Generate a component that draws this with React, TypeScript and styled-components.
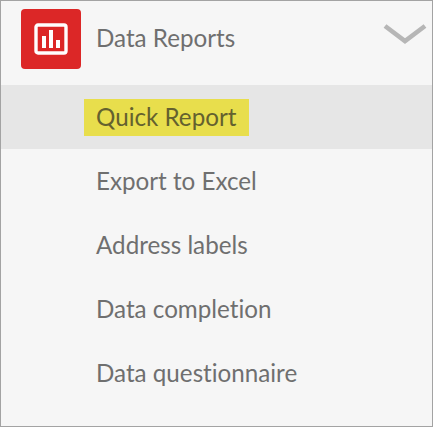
import React from 'react';
import styled, { createGlobalStyle } from 'styled-components';

const items = ['Quick Report', 'Export to Excel', 'Address labels', 'Data completion', 'Data questionnaire'];

const GlobalStyle = createGlobalStyle`
  html, body {
    margin: 0;
    padding: 0;
    background: #f6f6f6;
  }
`;

const Panel = styled.div`
  box-sizing: border-box;
  width: 433px;
  height: 427px;
  border: 1px solid #a3a3a3;
  background: #f6f6f6;
  font-family: Lato, sans-serif;
  font-size: 24.2px;
  font-variant-ligatures: none;
  color: #6f6f6f;
  overflow: hidden;
`;

const Header = styled.div`
  display: flex;
  align-items: center;
  height: 84px;
  padding: 0 5px 16px 20px;
  box-sizing: border-box;
`;

const IconBox = styled.div`
  width: 60px;
  height: 60px;
  margin-top: 7px;
  border-radius: 4px;
  background: #dc2727;
  display: flex;
  align-items: center;
  justify-content: center;
`;

const Title = styled.div`
  margin: 5px 0 0 15px;
  flex: 1;
`;

const Menu = styled.div`
  display: flex;
  flex-direction: column;
`;

const Row = styled.div<{ $active?: boolean }>`
  height: 64px;
  display: flex;
  align-items: center;
  padding-left: 83px;
  background: ${(p) => (p.$active ? '#e6e6e6' : 'transparent')};
`;

const Label = styled.span<{ $active?: boolean }>`
  padding: 0 13px 0 12px;
  height: 37px;
  line-height: 35px;
  background: ${(p) => (p.$active ? '#e8de4c' : 'transparent')};
  color: ${(p) => (p.$active ? '#64612f' : 'inherit')};
`;

function ReportIcon() {
  return (
    <svg width="34" height="32" viewBox="0 0 34 32">
      <rect x="2" y="2" width="30" height="28" rx="2" fill="none" stroke="#fff" strokeWidth="3.4" />
      <rect x="8" y="13" width="4" height="12" fill="#fff" />
      <rect x="15" y="7" width="4" height="18" fill="#fff" />
      <rect x="22" y="17" width="4" height="8" fill="#fff" />
    </svg>
  );
}

function Chevron() {
  return (
    <svg width="44" height="24" viewBox="0 0 44 24">
      <path d="M2 3 L22 18 L42 3" fill="none" stroke="#b6b6b6" strokeWidth="4.6" />
    </svg>
  );
}

export default function App() {
  return (
    <Panel>
      <GlobalStyle />
      <Header>
        <IconBox>
          <ReportIcon />
        </IconBox>
        <Title>Data Reports</Title>
        <Chevron />
      </Header>
      <Menu>
        {items.map((item, i) => (
          <Row key={item} $active={i === 0}>
            <Label $active={i === 0}>{item}</Label>
          </Row>
        ))}
      </Menu>
    </Panel>
  );
}
